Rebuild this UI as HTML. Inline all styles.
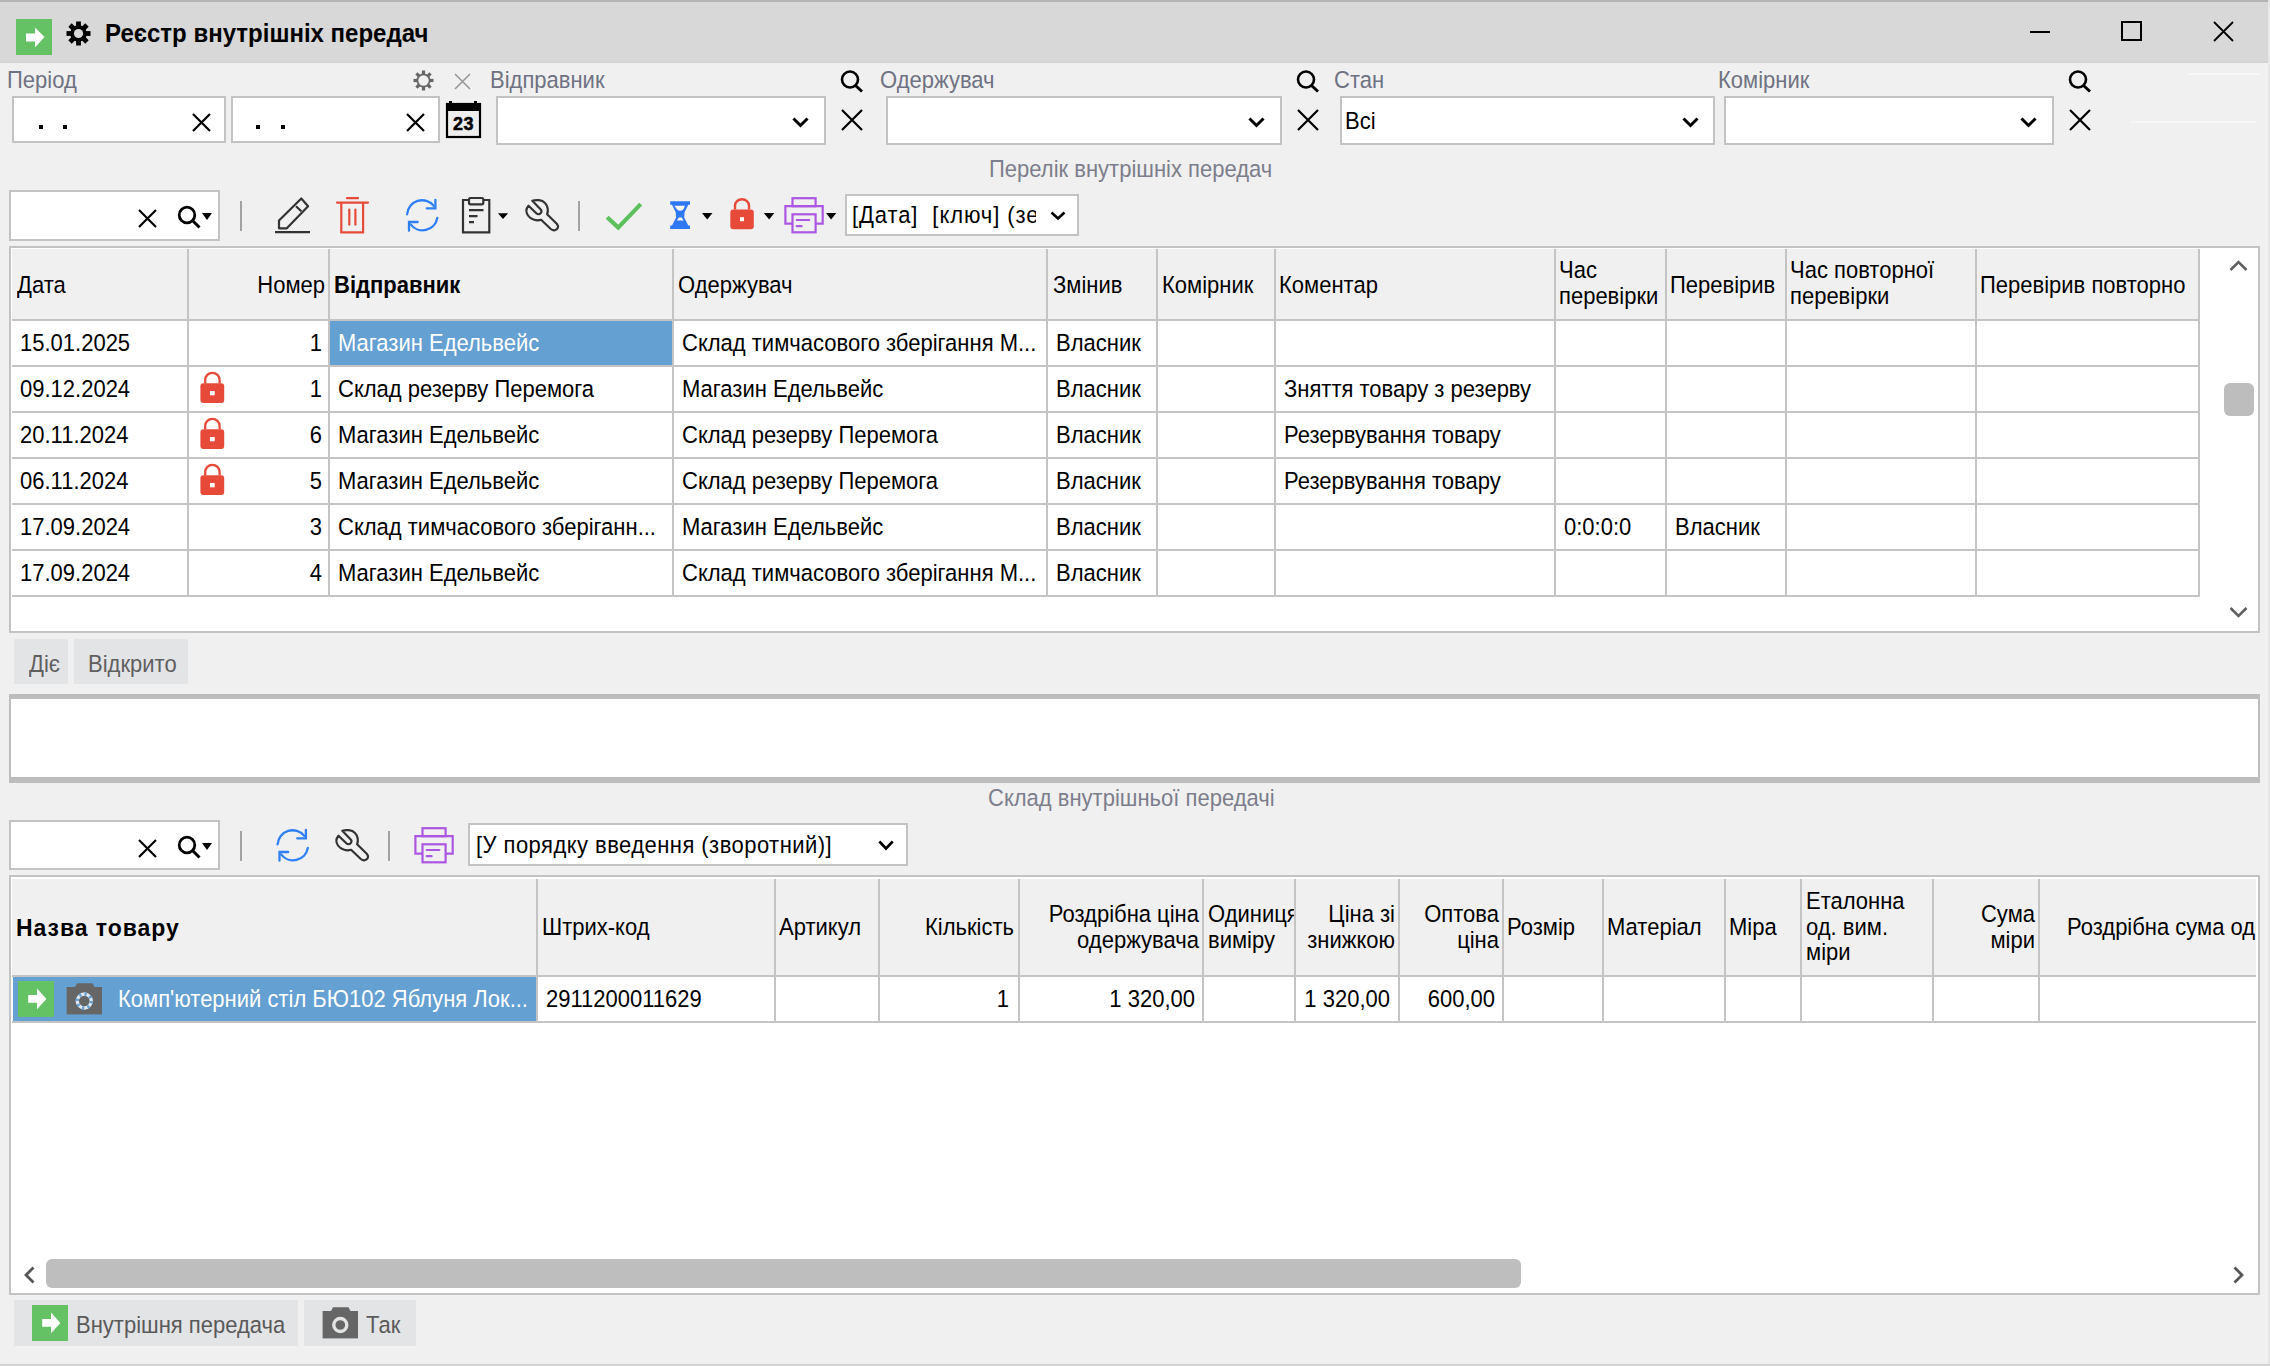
<!DOCTYPE html>
<html><head><meta charset="utf-8">
<style>
*{box-sizing:border-box;margin:0;padding:0}
html,body{width:2270px;height:1366px;overflow:hidden;background:#f0f0f0;font-family:"Liberation Sans",sans-serif;font-size:22px;color:#000}
.a{position:absolute}
.t{position:absolute;white-space:nowrap;line-height:26px;transform:scaleY(1.08)}
.box{position:absolute;background:#fff;border:2px solid #c3c3c3}
.lbl{position:absolute;white-space:nowrap;color:#6f7282;line-height:26px;transform:scaleY(1.08)}
.vl{position:absolute;width:2px;background:#c4c4c4}
.hl{position:absolute;height:2px;background:#c4c4c4}
.hd{position:absolute;white-space:nowrap;line-height:26px;transform:scaleY(1.08)}
.ml{line-height:24px}
.c{position:absolute;white-space:nowrap;line-height:26px;transform:scaleY(1.08)}
.r{text-align:right}
svg{position:absolute;overflow:visible}
</style></head><body>
<!-- window frame -->
<div class="a" style="left:0;top:0;width:2270px;height:63px;background:#d8d8d8;border-bottom:2px solid #d3d3d3"></div>
<div class="a" style="left:0;top:0;width:2270px;height:2px;background:#b4b4b4"></div>
<div class="a" style="left:2268px;top:0;width:2px;height:1366px;background:#e6e6e6"></div>
<div class="a" style="left:0;top:1364px;width:2270px;height:2px;background:#d2d2d2"></div>

<!-- TITLEBAR -->

<div class="a" style="left:16px;top:19px;width:36px;height:36px;background:#64c164"></div>
<svg class="a" style="left:16px;top:19px" width="36" height="36"><path d="M10 14.5H19V8.5L28.5 18L19 28.5V22.5H10Z" fill="#fff"/></svg>
<svg class="a" style="left:66px;top:21px" width="25" height="25" viewBox="-12.5 -12.5 25 25">
<g fill="#000"><circle r="8.3"/>
<rect x="-2.4" y="-12" width="4.8" height="24"/>
<rect x="-2.4" y="-12" width="4.8" height="24" transform="rotate(45)"/>
<rect x="-2.4" y="-12" width="4.8" height="24" transform="rotate(90)"/>
<rect x="-2.4" y="-12" width="4.8" height="24" transform="rotate(135)"/>
</g><circle r="4.6" fill="#d9d9d9"/></svg>
<div class="t" style="left:105px;top:20px;font-size:24px;font-weight:bold;letter-spacing:0px">Реєстр внутрішніх передач</div>
<div class="a" style="left:2030px;top:31px;width:20px;height:2px;background:#000"></div>
<div class="a" style="left:2121px;top:21px;width:21px;height:20px;border:2px solid #000"></div>
<svg class="a" style="left:2213px;top:21px" width="21" height="21"><path d="M1 1L20 20M20 1L1 20" stroke="#000" stroke-width="1.8" fill="none"/></svg>

<!-- FILTERS -->

<div class="lbl" style="left:7px;top:67px">Період</div>
<svg class="a" style="left:413px;top:70px" width="21" height="21" viewBox="-10.5 -10.5 21 21">
<g fill="#666"><circle r="7"/>
<rect x="-1.6" y="-10" width="3.2" height="20"/>
<rect x="-1.6" y="-10" width="3.2" height="20" transform="rotate(45)"/>
<rect x="-1.6" y="-10" width="3.2" height="20" transform="rotate(90)"/>
<rect x="-1.6" y="-10" width="3.2" height="20" transform="rotate(135)"/>
</g><circle r="5.2" fill="#f0f0f0"/></svg>
<svg class="a" style="left:454px;top:73px" width="17" height="17"><path d="M1 1L16 16M16 1L1 16" stroke="#999" stroke-width="1.6" fill="none"/></svg>
<div class="box" style="left:12px;top:96px;width:214px;height:47px"></div>
<div class="a" style="left:39px;top:125px;width:4px;height:4px;background:#000"></div>
<div class="a" style="left:63px;top:125px;width:4px;height:4px;background:#000"></div>
<svg class="a" style="left:192px;top:113px" width="19" height="19"><path d="M1 1L18 18M18 1L1 18" stroke="#000" stroke-width="2.2" fill="none"/></svg>
<div class="box" style="left:231px;top:96px;width:209px;height:47px"></div>
<div class="a" style="left:256px;top:125px;width:4px;height:4px;background:#000"></div>
<div class="a" style="left:281px;top:125px;width:4px;height:4px;background:#000"></div>
<svg class="a" style="left:406px;top:113px" width="19" height="19"><path d="M1 1L18 18M18 1L1 18" stroke="#000" stroke-width="2.2" fill="none"/></svg>
<svg class="a" style="left:446px;top:101px" width="35" height="37">
<rect x="1" y="3" width="33" height="33" fill="#eee" stroke="#000" stroke-width="2.2"/>
<rect x="0" y="2" width="35" height="8" fill="#000"/>
<rect x="3" y="0" width="3" height="3" fill="#000"/><rect x="28" y="0" width="3" height="3" fill="#000"/>
<text x="17.5" y="28.8" text-anchor="middle" font-family="Liberation Sans" font-weight="bold" font-size="18" fill="#000" letter-spacing="0.6" stroke="#000" stroke-width="0.5">23</text>
</svg>
<div class="lbl" style="left:490px;top:67px">Відправник</div>
<div class="box" style="left:496px;top:96px;width:330px;height:49px"></div>
<svg class="a" style="left:792px;top:117px" width="17" height="10"><path d="M1.5 1.5L8.5 8.5L15.5 1.5" stroke="#000" stroke-width="3" fill="none"/></svg><svg class="a" style="left:840px;top:70px" width="24" height="23"><circle cx="10" cy="9.5" r="8" stroke="#000" stroke-width="2.6" fill="none"/><path d="M15.5 15.5L22 21.5" stroke="#000" stroke-width="3" fill="none"/></svg><svg class="a" style="left:841px;top:109px" width="22" height="22"><path d="M1 1L21 21M21 1L1 21" stroke="#000" stroke-width="2.2" fill="none"/></svg>
<div class="lbl" style="left:880px;top:67px">Одержувач</div>
<div class="box" style="left:886px;top:96px;width:396px;height:49px"></div>
<svg class="a" style="left:1248px;top:117px" width="17" height="10"><path d="M1.5 1.5L8.5 8.5L15.5 1.5" stroke="#000" stroke-width="3" fill="none"/></svg><svg class="a" style="left:1296px;top:70px" width="24" height="23"><circle cx="10" cy="9.5" r="8" stroke="#000" stroke-width="2.6" fill="none"/><path d="M15.5 15.5L22 21.5" stroke="#000" stroke-width="3" fill="none"/></svg><svg class="a" style="left:1297px;top:109px" width="22" height="22"><path d="M1 1L21 21M21 1L1 21" stroke="#000" stroke-width="2.2" fill="none"/></svg>
<div class="lbl" style="left:1334px;top:67px">Стан</div>
<div class="box" style="left:1340px;top:96px;width:375px;height:49px"></div>
<div class="t" style="left:1345px;top:108px">Всі</div>
<svg class="a" style="left:1682px;top:117px" width="17" height="10"><path d="M1.5 1.5L8.5 8.5L15.5 1.5" stroke="#000" stroke-width="3" fill="none"/></svg>
<div class="lbl" style="left:1718px;top:67px">Комірник</div>
<div class="box" style="left:1724px;top:96px;width:330px;height:49px"></div>
<svg class="a" style="left:2020px;top:117px" width="17" height="10"><path d="M1.5 1.5L8.5 8.5L15.5 1.5" stroke="#000" stroke-width="3" fill="none"/></svg><svg class="a" style="left:2068px;top:70px" width="24" height="23"><circle cx="10" cy="9.5" r="8" stroke="#000" stroke-width="2.6" fill="none"/><path d="M15.5 15.5L22 21.5" stroke="#000" stroke-width="3" fill="none"/></svg><svg class="a" style="left:2069px;top:109px" width="22" height="22"><path d="M1 1L21 21M21 1L1 21" stroke="#000" stroke-width="2.2" fill="none"/></svg>
<div class="a" style="left:2188px;top:73px;width:72px;height:2px;background:#f6f6f6"></div>
<div class="a" style="left:2130px;top:121px;width:127px;height:2px;background:#f6f6f6"></div>
<div class="lbl" style="left:989px;top:156px;color:#7c7e8c">Перелік внутрішніх передач</div>


<!-- GRID1 -->
<div class="box" style="left:9px;top:190px;width:211px;height:51px"></div>
<svg class="a" style="left:138px;top:209px" width="19" height="19"><path d="M1 1L18 18M18 1L1 18" stroke="#000" stroke-width="2.2" fill="none"/></svg><svg class="a" style="left:176px;top:205px" width="28" height="25"><circle cx="11" cy="10" r="7.8" stroke="#000" stroke-width="2.8" fill="none"/><path d="M16.5 15.5L23.5 22.5" stroke="#000" stroke-width="3" fill="none"/></svg><svg class="a" style="left:202px;top:213px" width="10" height="7"><path d="M0 0H10L5.0 7Z" fill="#000"/></svg><div class="a" style="left:240px;top:201px;width:2px;height:30px;background:#a2a2a2"></div>
<svg class="a" style="left:0;top:0" width="2270" height="260">
<g fill="none" stroke="#333" stroke-width="2.2" stroke-linejoin="round">
<path d="M279 228.3V220.5L301.3 198.5L308.1 206.2L286.8 228.3Z"/><path d="M296 206.2L301.3 211.3"/>
<path d="M275 232.2H310"/>
</g>
<g fill="none" stroke="#e84a3a" stroke-width="2.2" stroke-linecap="round">
<path d="M347 198.2H358M337 202.6H368"/><path d="M341.3 203V232.4H363.1V203"/><path d="M349.3 209.5V224.7M355.4 209.5V224.7"/>
</g>
<g fill="none" stroke="#2f80f6" stroke-width="2.3" stroke-linecap="round">
<path d="M407.1 214.3A15 15 0 0 1 433.8 205.9"/><path d="M426.7 208.3H435.4V199.8"/>
<path d="M437.3 218A15 15 0 0 1 410.6 224.4"/><path d="M417.7 222H409V230.7"/>
</g>
<g fill="none" stroke="#333" stroke-width="2.2">
<path d="M469 200H463V232.3H489.3V200H483.3"/><rect x="469" y="198" width="14.3" height="6.3" rx="1.5"/>
<path d="M469 210.1H483.5M469 216.2H477.5M469 222.1H474"/>
</g>
<path d="M498 213.3H508.1L503 219Z" fill="#000"/>
<path d="M532.3 200.8C536 199.5 542 199.8 545 203C548 206 548.5 211 547.1 214.2L557 224C559 226.5 558 230 554.5 230.3C553 230.4 551.8 229.8 550.8 229L541.1 219.8C537 221 531 220 528 215.5C526 212.5 526 208.5 528.5 205.7L536.6 213.5C538 214.8 540.2 214.3 541 212.8C541.8 211.5 541.5 210.2 540.5 209.3Z" fill="none" stroke="#333" stroke-width="2.2" stroke-linejoin="round"/>
</svg>
<div class="a" style="left:578px;top:201px;width:2px;height:30px;background:#a2a2a2"></div>
<svg class="a" style="left:0;top:0" width="2270" height="260">
<path d="M607.2 217.3L618.2 227.6L640.7 204.1" fill="none" stroke="#5cc15c" stroke-width="4.2"/>
<path d="M670.2 201.3H690V204.8H688.3L684.6 212.3L684.2 217.6L688.3 225.5H690V229H670.2V225.5H672L676.1 217.6L675.7 212.3L672 204.8H670.2Z" fill="#2f78f5"/>
<path d="M674.3 205.8H685L683.3 209.6Q680.2 212 677.1 209.6Z" fill="#fbf7ef"/>
<path d="M678.8 217.4H681.6L683.6 220.6H676.9Z" fill="#fbf7ef"/>
<path d="M702 213.1H712.5L707.2 219.5Z" fill="#000"/>
<path d="M735 209.5V205.5A7 6.3 0 0 1 749 205.5V209.5" fill="none" stroke="#e84a3a" stroke-width="2.4"/>
<rect x="730.3" y="209.5" width="23.5" height="19.7" rx="3" fill="#e84a3a"/>
<rect x="740" y="217.2" width="4" height="4" fill="#fff"/>
<path d="M763.8 212.9H774.4L769.1 219.5Z" fill="#000"/>
<g fill="none" stroke="#ab57e2" stroke-width="2.2">
<rect x="792.5" y="198.2" width="23.1" height="8"/>
<path d="M792.5 223.7H785.4V206.2H822.7V223.7H815.6"/>
<rect x="792.5" y="214.3" width="23.1" height="18" fill="#f0f0f0"/>
<path d="M796.7 220H809.3M796.7 226.2H801.6" stroke-linecap="round"/>
</g>
<path d="M826 212.9H836.3L831.1 219.5Z" fill="#000"/>
</svg>
<div class="box" style="left:845px;top:194px;width:234px;height:42px"></div>
<div class="t" style="left:852px;top:202px;letter-spacing:0.9px;width:184px;overflow:hidden">[Дата]&nbsp; [ключ] (зе</div>
<svg class="a" style="left:1050px;top:211px" width="16" height="9"><path d="M1.5 1.5L8.0 7.5L14.5 1.5" stroke="#000" stroke-width="2.6" fill="none"/></svg>
<div class="a" style="left:9px;top:246px;width:2251px;height:387px;background:#fff;border:2px solid #c3c3c3"></div>
<div class="a" style="left:12px;top:249px;width:2187px;height:70px;background:#f0f0f0"></div>
<div class="hl" style="left:12px;top:319px;width:2188px"></div>
<div class="vl" style="left:186.5px;top:249px;height:348px"></div>
<div class="vl" style="left:328px;top:249px;height:348px"></div>
<div class="vl" style="left:672.3px;top:249px;height:348px"></div>
<div class="vl" style="left:1046px;top:249px;height:348px"></div>
<div class="vl" style="left:1155.7px;top:249px;height:348px"></div>
<div class="vl" style="left:1274px;top:249px;height:348px"></div>
<div class="vl" style="left:1553.5px;top:249px;height:348px"></div>
<div class="vl" style="left:1665.2px;top:249px;height:348px"></div>
<div class="vl" style="left:1785.4px;top:249px;height:348px"></div>
<div class="vl" style="left:1975.4px;top:249px;height:348px"></div>
<div class="vl" style="left:2197.7px;top:249px;height:348px"></div>
<div class="hl" style="left:12px;top:365px;width:2188px"></div>
<div class="hl" style="left:12px;top:411px;width:2188px"></div>
<div class="hl" style="left:12px;top:457px;width:2188px"></div>
<div class="hl" style="left:12px;top:503px;width:2188px"></div>
<div class="hl" style="left:12px;top:549px;width:2188px"></div>
<div class="hl" style="left:12px;top:595px;width:2188px"></div>
<div class="a" style="left:330px;top:321px;width:342px;height:44px;background:#64a0d2"></div>
<div class="hd" style="left:17px;top:272.4px;">Дата</div>
<div class="hd r" style="left:190px;top:272.4px;width:135px">Номер</div>
<div class="hd" style="left:334px;top:272.4px;font-weight:bold">Відправник</div>
<div class="hd" style="left:678px;top:272.4px;">Одержувач</div>
<div class="hd" style="left:1053px;top:272.4px;">Змінив</div>
<div class="hd" style="left:1162px;top:272.4px;">Комірник</div>
<div class="hd" style="left:1279px;top:272.4px;">Коментар</div>
<div class="hd ml" style="left:1559px;top:259.4px">Час<br>перевірки</div>
<div class="hd" style="left:1670px;top:272.4px;">Перевірив</div>
<div class="hd ml" style="left:1790px;top:259.4px">Час повторної<br>перевірки</div>
<div class="hd" style="left:1980px;top:272.4px;">Перевірив повторно</div>
<div class="c" style="left:20px;top:330.4px">15.01.2025</div>
<div class="c r" style="left:200px;top:330.4px;width:122px">1</div>
<div class="c" style="left:338px;top:330.4px;color:#fff;">Магазин Едельвейс</div>
<div class="c" style="left:682px;top:330.4px">Склад тимчасового зберігання М...</div>
<div class="c" style="left:1056px;top:330.4px">Власник</div>
<div class="c" style="left:20px;top:376.4px">09.12.2024</div>
<svg class="a" style="left:200px;top:367px" width="25" height="46"><path d="M5.2 16.5V13A7.2 7.2 0 0 1 19.6 13V16.5" fill="none" stroke="#e84a3a" stroke-width="2.3"/><rect x="0.4" y="16.3" width="23.8" height="19.7" rx="3" fill="#e84a3a"/><rect x="10" y="24" width="4.7" height="4.3" fill="#fff"/></svg>
<div class="c r" style="left:200px;top:376.4px;width:122px">1</div>
<div class="c" style="left:338px;top:376.4px;">Склад резерву Перемога</div>
<div class="c" style="left:682px;top:376.4px">Магазин Едельвейс</div>
<div class="c" style="left:1056px;top:376.4px">Власник</div>
<div class="c" style="left:1284px;top:376.4px">Зняття товару з резерву</div>
<div class="c" style="left:20px;top:422.4px">20.11.2024</div>
<svg class="a" style="left:200px;top:413px" width="25" height="46"><path d="M5.2 16.5V13A7.2 7.2 0 0 1 19.6 13V16.5" fill="none" stroke="#e84a3a" stroke-width="2.3"/><rect x="0.4" y="16.3" width="23.8" height="19.7" rx="3" fill="#e84a3a"/><rect x="10" y="24" width="4.7" height="4.3" fill="#fff"/></svg>
<div class="c r" style="left:200px;top:422.4px;width:122px">6</div>
<div class="c" style="left:338px;top:422.4px;">Магазин Едельвейс</div>
<div class="c" style="left:682px;top:422.4px">Склад резерву Перемога</div>
<div class="c" style="left:1056px;top:422.4px">Власник</div>
<div class="c" style="left:1284px;top:422.4px">Резервування товару</div>
<div class="c" style="left:20px;top:468.4px">06.11.2024</div>
<svg class="a" style="left:200px;top:459px" width="25" height="46"><path d="M5.2 16.5V13A7.2 7.2 0 0 1 19.6 13V16.5" fill="none" stroke="#e84a3a" stroke-width="2.3"/><rect x="0.4" y="16.3" width="23.8" height="19.7" rx="3" fill="#e84a3a"/><rect x="10" y="24" width="4.7" height="4.3" fill="#fff"/></svg>
<div class="c r" style="left:200px;top:468.4px;width:122px">5</div>
<div class="c" style="left:338px;top:468.4px;">Магазин Едельвейс</div>
<div class="c" style="left:682px;top:468.4px">Склад резерву Перемога</div>
<div class="c" style="left:1056px;top:468.4px">Власник</div>
<div class="c" style="left:1284px;top:468.4px">Резервування товару</div>
<div class="c" style="left:20px;top:514.4px">17.09.2024</div>
<div class="c r" style="left:200px;top:514.4px;width:122px">3</div>
<div class="c" style="left:338px;top:514.4px;">Склад тимчасового зберіганн...</div>
<div class="c" style="left:682px;top:514.4px">Магазин Едельвейс</div>
<div class="c" style="left:1056px;top:514.4px">Власник</div>
<div class="c" style="left:1564px;top:514.4px">0:0:0:0</div>
<div class="c" style="left:1675px;top:514.4px">Власник</div>
<div class="c" style="left:20px;top:560.4px">17.09.2024</div>
<div class="c r" style="left:200px;top:560.4px;width:122px">4</div>
<div class="c" style="left:338px;top:560.4px;">Магазин Едельвейс</div>
<div class="c" style="left:682px;top:560.4px">Склад тимчасового зберігання М...</div>
<div class="c" style="left:1056px;top:560.4px">Власник</div>
<svg class="a" style="left:2229px;top:260px" width="19" height="12"><path d="M1.5 10L9.5 2L17.5 10" fill="none" stroke="#606060" stroke-width="2.6"/></svg>
<div class="a" style="left:2224px;top:383px;width:30px;height:33px;background:#bdbdbd;border-radius:6px"></div>
<svg class="a" style="left:2229px;top:606px" width="19" height="12"><path d="M1.5 2L9.5 10L17.5 2" fill="none" stroke="#606060" stroke-width="2.6"/></svg>

<!-- GRID2 -->
<div class="a" style="left:14px;top:639px;width:54px;height:45px;background:#e3e4e6"></div>
<div class="a" style="left:74px;top:639px;width:114px;height:45px;background:#e3e4e6"></div>
<div class="t" style="left:29px;top:651px;color:#5f5f5f">Діє</div>
<div class="t" style="left:88px;top:651px;color:#5f5f5f">Відкрито</div>
<div class="a" style="left:9px;top:694px;width:2251px;height:89px;background:#fff;border:2px solid #bdbdbd;border-top-width:5px;border-bottom-width:6px"></div>
<div class="lbl" style="left:988px;top:785.4px;color:#7c7e8c">Склад внутрішньої передачі</div>
<div class="box" style="left:9px;top:820px;width:211px;height:50px"></div>
<svg class="a" style="left:138px;top:839px" width="19" height="19"><path d="M1 1L18 18M18 1L1 18" stroke="#000" stroke-width="2.2" fill="none"/></svg>
<svg class="a" style="left:176px;top:835px" width="28" height="25"><circle cx="11" cy="10" r="7.8" stroke="#000" stroke-width="2.8" fill="none"/><path d="M16.5 15.5L23.5 22.5" stroke="#000" stroke-width="3" fill="none"/></svg>
<svg class="a" style="left:202px;top:843px" width="10" height="7"><path d="M0 0H10L5.0 7Z" fill="#000"/></svg>
<div class="a" style="left:240px;top:831px;width:2px;height:30px;background:#a2a2a2"></div>
<div class="a" style="left:388px;top:831px;width:2px;height:30px;background:#a2a2a2"></div>
<svg class="a" style="left:0;top:630px" width="1000" height="260">
<g transform="translate(-129.5,0)" fill="none" stroke="#2f80f6" stroke-width="2.3" stroke-linecap="round">
<path d="M407.1 214.3A15 15 0 0 1 433.8 205.9"/><path d="M426.7 208.3H435.4V199.8"/>
<path d="M437.3 218A15 15 0 0 1 410.6 224.4"/><path d="M417.7 222H409V230.7"/>
</g>
<g transform="translate(-190,0)">
<path d="M532.3 200.8C536 199.5 542 199.8 545 203C548 206 548.5 211 547.1 214.2L557 224C559 226.5 558 230 554.5 230.3C553 230.4 551.8 229.8 550.8 229L541.1 219.8C537 221 531 220 528 215.5C526 212.5 526 208.5 528.5 205.7L536.6 213.5C538 214.8 540.2 214.3 541 212.8C541.8 211.5 541.5 210.2 540.5 209.3Z" fill="none" stroke="#333" stroke-width="2.2" stroke-linejoin="round"/>
</g>
<g transform="translate(-370,0)" fill="none" stroke="#ab57e2" stroke-width="2.2">
<rect x="792.5" y="198.2" width="23.1" height="8"/>
<path d="M792.5 223.7H785.4V206.2H822.7V223.7H815.6"/>
<rect x="792.5" y="214.3" width="23.1" height="18" fill="#f0f0f0"/>
<path d="M796.7 220H809.3M796.7 226.2H801.6" stroke-linecap="round"/>
</g>
</svg>
<div class="box" style="left:468px;top:823px;width:440px;height:43px"></div>
<div class="t" style="left:476px;top:832px;letter-spacing:0.45px">[У порядку введення (зворотний)]</div>
<svg class="a" style="left:878px;top:840px" width="16" height="11"><path d="M1.3 1.5L8 8.5L14.7 1.5" stroke="#000" stroke-width="2.6" fill="none"/></svg>
<div class="a" style="left:9px;top:875px;width:2251px;height:420px;background:#fff;border:2px solid #c3c3c3"></div>
<div class="a" style="left:12px;top:879px;width:2244px;height:96px;background:#f0f0f0"></div>
<div class="hl" style="left:12px;top:975px;width:2244px"></div>
<div class="hl" style="left:12px;top:1021px;width:2244px"></div>
<div class="vl" style="left:536.4px;top:879px;height:144px"></div>
<div class="vl" style="left:774px;top:879px;height:144px"></div>
<div class="vl" style="left:878px;top:879px;height:144px"></div>
<div class="vl" style="left:1018px;top:879px;height:144px"></div>
<div class="vl" style="left:1202px;top:879px;height:144px"></div>
<div class="vl" style="left:1294px;top:879px;height:144px"></div>
<div class="vl" style="left:1398px;top:879px;height:144px"></div>
<div class="vl" style="left:1502.3px;top:879px;height:144px"></div>
<div class="vl" style="left:1602px;top:879px;height:144px"></div>
<div class="vl" style="left:1723.7px;top:879px;height:144px"></div>
<div class="vl" style="left:1800px;top:879px;height:144px"></div>
<div class="vl" style="left:1932.2px;top:879px;height:144px"></div>
<div class="vl" style="left:2037.6px;top:879px;height:144px"></div>
<div class="a" style="left:13px;top:977px;width:523px;height:44px;background:#64a0d2"></div>
<div class="a" style="left:18px;top:981px;width:36px;height:36px;background:#64c164"></div>
<svg class="a" style="left:18px;top:981px" width="36" height="36"><path d="M10.2 14H19V7.6L28.4 18L19 28.2V21.8H10.2Z" fill="#fff"/></svg>
<svg class="a" style="left:66px;top:982px" width="37" height="33">
<path d="M9 5L11 1.2H26.5L28.5 5Z" fill="#666"/><rect x="0.6" y="5" width="35.4" height="27.4" fill="#666"/>
<circle cx="18.3" cy="19" r="7" fill="none" stroke="#dde8f3" stroke-width="3.3"/>
<circle cx="18.3" cy="19" r="7" fill="none" stroke="#64a0d2" stroke-width="3.3" stroke-dasharray="2.2 3.3"/>
</svg>
<div class="c" style="left:118px;top:985.7px;color:#fff">Комп'ютерний стіл БЮ102 Яблуня Лок...</div>
<div class="hd" style="left:16px;top:914.4px;font-weight:bold;font-size:23px;letter-spacing:0.95px">Назва товару</div>
<div class="hd" style="left:542px;top:914.4px;">Штрих-код</div>
<div class="hd" style="left:779px;top:914.4px;">Артикул</div>
<div class="hd r" style="left:880px;top:914.4px;width:134px">Кількість</div>
<div class="hd ml r" style="left:1020px;top:903.4px;width:179px">Роздрібна ціна<br>одержувача</div>
<div class="a" style="left:1204px;top:879px;width:90px;height:96px;overflow:hidden"><div class="hd ml" style="left:4px;top:24.4px">Одиниця<br>виміру</div></div>
<div class="hd ml r" style="left:1296px;top:903.4px;width:99px">Ціна зі<br>знижкою</div>
<div class="hd ml r" style="left:1400px;top:903.4px;width:99px">Оптова<br>ціна</div>
<div class="hd" style="left:1507px;top:914.4px;">Розмір</div>
<div class="hd" style="left:1607px;top:914.4px;">Матеріал</div>
<div class="hd" style="left:1729px;top:914.4px;">Міра</div>
<div class="hd ml" style="left:1806px;top:891.1px">Еталонна<br>од. вим.<br>міри</div>
<div class="hd ml r" style="left:1935px;top:903.4px;width:100px">Сума<br>міри</div>
<div class="a" style="left:2040px;top:879px;width:216px;height:96px;overflow:hidden"><div class="hd" style="left:27px;top:35.4px">Роздрібна сума одержувача</div></div>
<div class="c" style="left:546px;top:985.7px">2911200011629</div>
<div class="c r" style="left:880px;top:985.7px;width:129px">1</div>
<div class="c r" style="left:1020px;top:985.7px;width:175px">1 320,00</div>
<div class="c r" style="left:1296px;top:985.7px;width:94px">1 320,00</div>
<div class="c r" style="left:1400px;top:985.7px;width:95px">600,00</div>
<svg class="a" style="left:23px;top:1266px" width="13" height="18"><path d="M10.5 1.5L3 9L10.5 16.5" fill="none" stroke="#555" stroke-width="2.8"/></svg>
<div class="a" style="left:46px;top:1259px;width:1475px;height:29px;background:#bebebe;border-radius:6px"></div>
<svg class="a" style="left:2232px;top:1266px" width="13" height="18"><path d="M2.5 1.5L10 9L2.5 16.5" fill="none" stroke="#555" stroke-width="2.8"/></svg>
<div class="a" style="left:14px;top:1300px;width:284px;height:46px;background:#e3e4e6"></div>
<div class="a" style="left:304px;top:1300px;width:112px;height:46px;background:#e3e4e6"></div>
<div class="a" style="left:32px;top:1305px;width:36px;height:36px;background:#64c164"></div>
<svg class="a" style="left:32px;top:1305px" width="36" height="36"><path d="M10.2 14H19V7.6L28.4 18L19 28.2V21.8H10.2Z" fill="#fff"/></svg>
<div class="t" style="left:76px;top:1312px;color:#5a5a5a">Внутрішня передача</div>
<svg class="a" style="left:322px;top:1306px" width="37" height="33">
<path d="M9 5L11 1.2H26.5L28.5 5Z" fill="#666"/><rect x="0.6" y="5" width="35.4" height="27.4" fill="#666"/>
<circle cx="18.3" cy="19" r="6.5" fill="none" stroke="#e3e4e6" stroke-width="3.3"/>
</svg>
<div class="t" style="left:366px;top:1312px;color:#5a5a5a">Так</div>

</body></html>
